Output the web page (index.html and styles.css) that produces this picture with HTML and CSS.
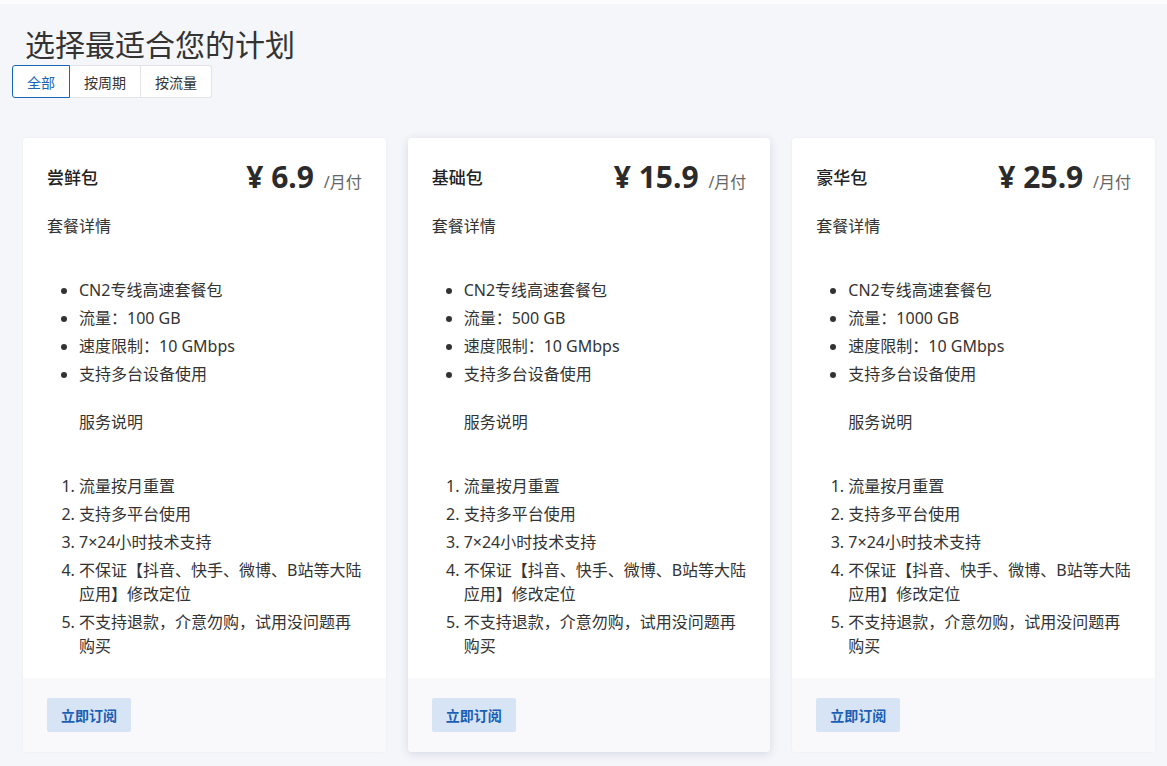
FILE: index.html
```html
<!DOCTYPE html>
<html lang="zh-CN">
<head>
    <meta charset="UTF-8">
    <meta name="viewport" content="width=device-width, initial-scale=1.0">
    <title>选择最适合您的计划</title>
    <link rel="stylesheet" href="styles.css">
</head>
<body>
    <div class="topbar"></div>
    <div class="page">
        <h1 class="page-title">选择最适合您的计划</h1>
        <div class="tabs">
            <button class="tab active">全部</button>
            <button class="tab">按周期</button>
            <button class="tab">按流量</button>
        </div>

        <div class="plans">
            <div class="plan">
                <div class="plan-body">
                    <div class="plan-head">
                        <span class="plan-name">尝鲜包</span>
                        <span class="plan-price">¥ 6.9 <small>/月付</small></span>
                    </div>
                    <p class="plan-sub">套餐详情</p>
                    <ul class="features">
                        <li>CN2专线高速套餐包</li>
                        <li>流量：100 GB</li>
                        <li>速度限制：10 GMbps</li>
                        <li>支持多台设备使用</li>
                    </ul>
                    <p class="note">服务说明</p>
                    <ol class="rules">
                        <li>流量按月重置</li>
                        <li>支持多平台使用</li>
                        <li>7×24小时技术支持</li>
                        <li>不保证【抖音、快手、微博、B站等大陆应用】修改定位</li>
                        <li>不支持退款，介意勿购，试用没问题再购买</li>
                    </ol>
                </div>
                <div class="plan-foot">
                    <button class="buy">立即订阅</button>
                </div>
            </div>

            <div class="plan hover">
                <div class="plan-body">
                    <div class="plan-head">
                        <span class="plan-name">基础包</span>
                        <span class="plan-price">¥ 15.9 <small>/月付</small></span>
                    </div>
                    <p class="plan-sub">套餐详情</p>
                    <ul class="features">
                        <li>CN2专线高速套餐包</li>
                        <li>流量：500 GB</li>
                        <li>速度限制：10 GMbps</li>
                        <li>支持多台设备使用</li>
                    </ul>
                    <p class="note">服务说明</p>
                    <ol class="rules">
                        <li>流量按月重置</li>
                        <li>支持多平台使用</li>
                        <li>7×24小时技术支持</li>
                        <li>不保证【抖音、快手、微博、B站等大陆应用】修改定位</li>
                        <li>不支持退款，介意勿购，试用没问题再购买</li>
                    </ol>
                </div>
                <div class="plan-foot">
                    <button class="buy">立即订阅</button>
                </div>
            </div>

            <div class="plan">
                <div class="plan-body">
                    <div class="plan-head">
                        <span class="plan-name">豪华包</span>
                        <span class="plan-price">¥ 25.9 <small>/月付</small></span>
                    </div>
                    <p class="plan-sub">套餐详情</p>
                    <ul class="features">
                        <li>CN2专线高速套餐包</li>
                        <li>流量：1000 GB</li>
                        <li>速度限制：10 GMbps</li>
                        <li>支持多台设备使用</li>
                    </ul>
                    <p class="note">服务说明</p>
                    <ol class="rules">
                        <li>流量按月重置</li>
                        <li>支持多平台使用</li>
                        <li>7×24小时技术支持</li>
                        <li>不保证【抖音、快手、微博、B站等大陆应用】修改定位</li>
                        <li>不支持退款，介意勿购，试用没问题再购买</li>
                    </ol>
                </div>
                <div class="plan-foot">
                    <button class="buy">立即订阅</button>
                </div>
            </div>
        </div>
    </div>
</body>
</html>
```

FILE: styles.css
```css
body {
    font-family: "Noto Sans", "Noto Sans CJK SC", sans-serif;
    background-color: #f5f6fa;
    color: #333;
    margin: 0;
    padding: 0;
}
.topbar {
    height: 4px;
    background-color: #fcfcfe;
}
.page {
    padding: 0 12px 14px 12px;
}
.page-title {
    margin: 22px 0 0 13px;
    font-size: 30px;
    font-weight: 400;
    line-height: 38px;
    color: #333;
}
.tabs {
    display: flex;
    margin-top: 1px;
}
.tab {
    font-family: inherit;
    font-size: 14px;
    color: #333;
    background-color: #fff;
    border: 1px solid #e3e4ea;
    border-left: none;
    height: 33px;
    padding: 0 14px;
    cursor: pointer;
}
.tab:last-child {
    border-radius: 0 3px 3px 0;
}
.tab.active {
    color: #1a64b8;
    border: 1px solid #1a64b8;
    border-radius: 3px 0 0 3px;
}
.plans {
    display: grid;
    grid-template-columns: repeat(3, 1fr);
    gap: 22px;
    margin: 40px 0 0 11px;
}
.plan {
    background-color: #fff;
    border-radius: 4px;
    box-shadow: 0 0 3px rgba(30, 40, 90, 0.05);
    display: flex;
    flex-direction: column;
}
.plan.hover {
    box-shadow: 0 2px 10px rgba(30, 40, 90, 0.14);
}
.plan-body {
    padding: 19px 24px 20px 24px;
    flex: 1;
}
.plan-head {
    display: flex;
    justify-content: space-between;
    align-items: center;
}
.plan-name {
    font-size: 17px;
    font-weight: 500;
    color: #222;
    margin-bottom: 6px;
}
.plan-price {
    font-size: 30px;
    font-weight: 700;
    color: #2b2b2b;
    line-height: 40px;
}
.plan-price small {
    font-size: 16px;
    font-weight: 400;
    color: #666;
    margin-left: 2px;
}
.plan-sub {
    margin: 12px 0 0 0;
    font-size: 16px;
    line-height: 24px;
}
.features, .rules {
    margin: 40px 0 0 0;
    padding-left: 32px;
    font-size: 16px;
    line-height: 24px;
}
.features li, .rules li {
    margin-bottom: 4px;
}
.features li:last-child, .rules li:last-child {
    margin-bottom: 0;
}
.note {
    margin: 24px 0 0 32px;
    font-size: 16px;
    line-height: 24px;
}
.plan-foot {
    background-color: #f9f9fc;
    padding: 20px 24px;
    border-radius: 0 0 4px 4px;
}
.buy {
    font-family: inherit;
    font-size: 14px;
    font-weight: 700;
    color: #1a5fb4;
    background-color: #d6e4f5;
    border: none;
    border-radius: 2px;
    height: 34px;
    padding: 0 14px;
    cursor: pointer;
}
```
